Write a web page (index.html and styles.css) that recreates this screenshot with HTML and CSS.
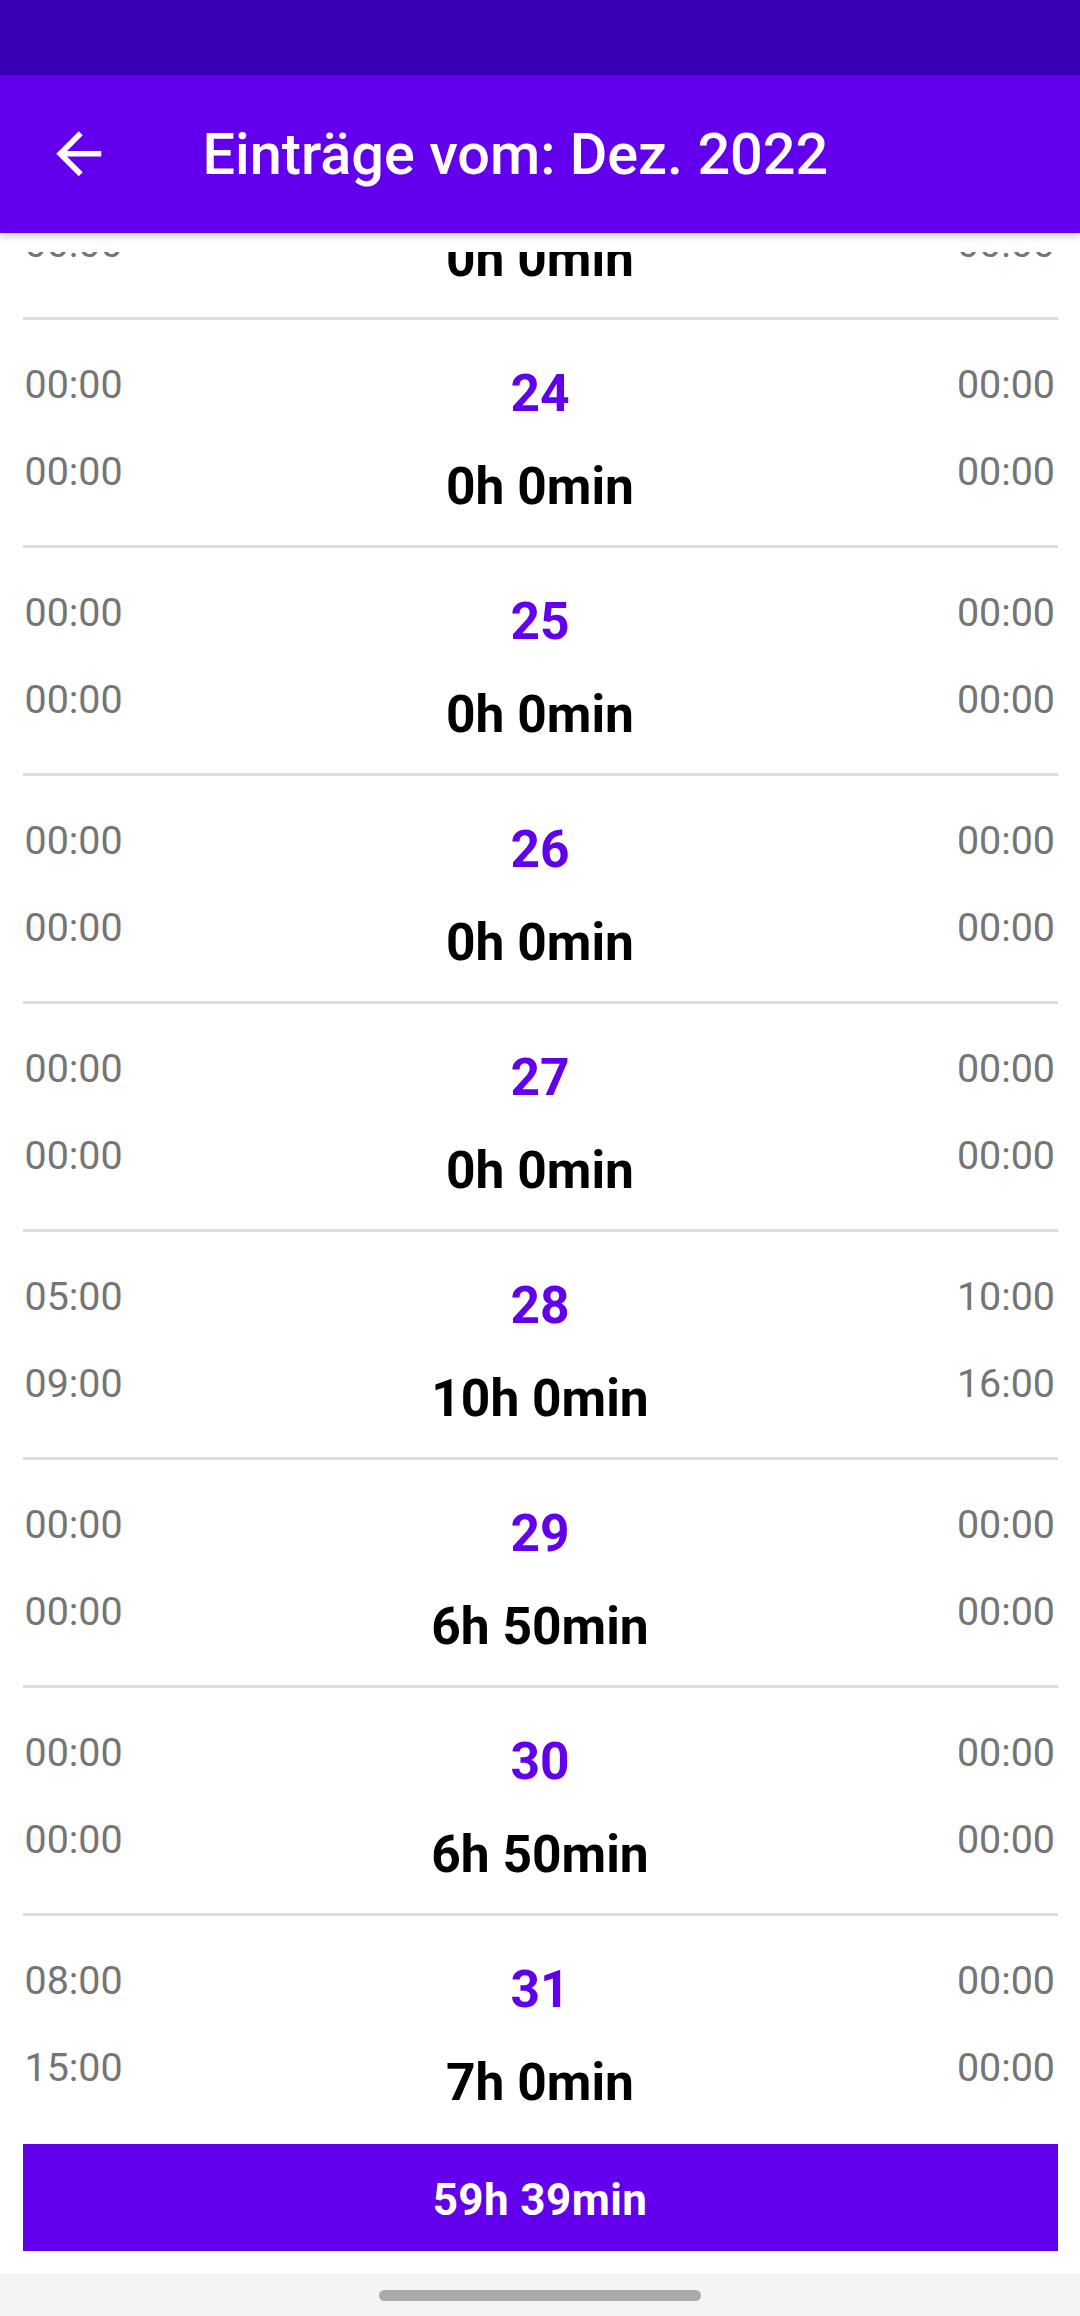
FILE: index.html
```html
<!DOCTYPE html>
<html lang="de">
<head>
<meta charset="utf-8">
<title>Einträge</title>
<link rel="stylesheet" href="styles.css">
</head>
<body>
<div class="screen">
  <div class="status"></div>
  <header class="appbar">
    <div class="nav-btn">
      <svg class="back" viewBox="0 0 24 24" width="67.5" height="67.5"><path fill="#fff" d="M20 11H7.83l5.59-5.59L12 4l-8 8 8 8 1.41-1.41L7.83 13H20v-2z"/></svg>
    </div>
    <h1 class="title">Einträge vom: Dez. 2022</h1>
  </header>
  <main class="list">
    <div class="list-inner">
      <div class="row">
        <div class="times"><span>00:00</span><span>00:00</span></div>
        <div class="center"><div class="day">23</div><div class="dur">0h 0min</div></div>
        <div class="times right"><span>00:00</span><span>00:00</span></div>
      </div>
      <div class="row">
        <div class="times"><span>00:00</span><span>00:00</span></div>
        <div class="center"><div class="day">24</div><div class="dur">0h 0min</div></div>
        <div class="times right"><span>00:00</span><span>00:00</span></div>
      </div>
      <div class="row">
        <div class="times"><span>00:00</span><span>00:00</span></div>
        <div class="center"><div class="day">25</div><div class="dur">0h 0min</div></div>
        <div class="times right"><span>00:00</span><span>00:00</span></div>
      </div>
      <div class="row">
        <div class="times"><span>00:00</span><span>00:00</span></div>
        <div class="center"><div class="day">26</div><div class="dur">0h 0min</div></div>
        <div class="times right"><span>00:00</span><span>00:00</span></div>
      </div>
      <div class="row">
        <div class="times"><span>00:00</span><span>00:00</span></div>
        <div class="center"><div class="day">27</div><div class="dur">0h 0min</div></div>
        <div class="times right"><span>00:00</span><span>00:00</span></div>
      </div>
      <div class="row">
        <div class="times"><span>05:00</span><span>09:00</span></div>
        <div class="center"><div class="day">28</div><div class="dur">10h 0min</div></div>
        <div class="times right"><span>10:00</span><span>16:00</span></div>
      </div>
      <div class="row">
        <div class="times"><span>00:00</span><span>00:00</span></div>
        <div class="center"><div class="day">29</div><div class="dur">6h 50min</div></div>
        <div class="times right"><span>00:00</span><span>00:00</span></div>
      </div>
      <div class="row">
        <div class="times"><span>00:00</span><span>00:00</span></div>
        <div class="center"><div class="day">30</div><div class="dur">6h 50min</div></div>
        <div class="times right"><span>00:00</span><span>00:00</span></div>
      </div>
      <div class="row">
        <div class="times"><span>08:00</span><span>15:00</span></div>
        <div class="center"><div class="day">31</div><div class="dur">7h 0min</div></div>
        <div class="times right"><span>00:00</span><span>00:00</span></div>
      </div>
    </div>
  </main>
  <div class="footer">
    <button class="total">59h 39min</button>
  </div>
  <div class="navbar"><div class="handle"></div></div>
</div>
</body>
</html>
```
FILE: styles.css
```css
* { box-sizing: border-box; }
html, body { margin: 0; padding: 0; background: #fff; }
body { font-family: Roboto, "Noto Sans", "Liberation Sans", sans-serif; }

.screen {
  width: 1080px;
  height: 2316px;
  display: flex;
  flex-direction: column;
  overflow: hidden;
  background: #fff;
}

.status {
  flex: none;
  height: 75px;
  background: #3700b3;
}

.appbar {
  flex: none;
  height: 158px;
  background: #6200ee;
  display: flex;
  align-items: center;
  position: relative;
  z-index: 2;
  box-shadow: 0 3px 8px rgba(0, 0, 0, 0.22);
}

.nav-btn {
  width: 157.5px;
  height: 158px;
  display: flex;
  align-items: center;
  justify-content: center;
  flex: none;
}

.back { display: block; }

.title {
  margin: 0 0 0 45px;
  color: #fff;
  font-size: 57.6px;
  font-weight: 500;
  line-height: 68px;
  letter-spacing: 0;
  padding-top: 1px;
}

.list {
  flex: none;
  margin-top: 19px;
  height: 1889px;
  overflow: hidden;
  position: relative;
  z-index: 1;
}

.list-inner {
  margin-top: -160px;
}

.row {
  height: 228px;
  margin: 0 22.5px;
  border-bottom: 3px solid #dedede;
  display: grid;
  grid-template-columns: 1fr auto 1fr;
  align-items: start;
}

.times {
  display: flex;
  flex-direction: column;
  gap: 40.6px;
  padding-top: 42.2px;
  padding-left: 2px;
  font-size: 39.4px;
  line-height: 46px;
  color: #757575;
}

.times.right {
  align-items: flex-end;
  padding-left: 0;
  padding-right: 2.5px;
}

.center {
  display: flex;
  flex-direction: column;
  align-items: center;
  padding-top: 43px;
  gap: 31px;
  font-weight: 700;
  font-size: 51.5px;
  line-height: 62px;
}

.day { color: #6200ee; }
.dur { color: #000; }

.footer {
  flex: none;
  padding: 3px 22.5px 22.3px;
}

.total {
  display: block;
  width: 100%;
  height: 106.7px;
  border: 0;
  border-radius: 0;
  background: #6200ee;
  color: #fff;
  font-family: Roboto, "Noto Sans", sans-serif;
  font-size: 44px;
  font-weight: 700;
  letter-spacing: 0.4px;
  padding: 5px 0 0;
}

.navbar {
  flex: none;
  height: 43px;
  background: #f4f4f4;
  display: flex;
  justify-content: center;
  padding-top: 17px;
}

.handle {
  width: 322px;
  height: 11px;
  border-radius: 6px;
  background: #aaaaaa;
}
```
